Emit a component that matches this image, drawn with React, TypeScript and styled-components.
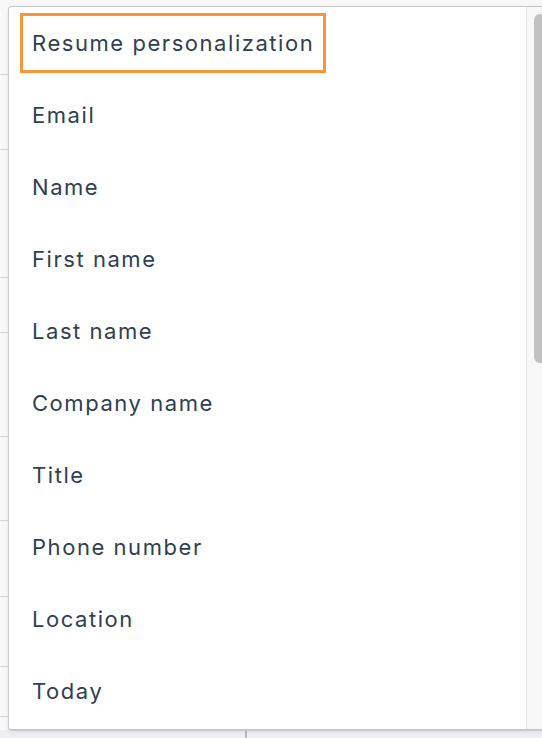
import React from "react";
import styled, { createGlobalStyle } from "styled-components";

const Global = createGlobalStyle`
  html, body { margin: 0; padding: 0; }
  body {
    width: 542px;
    height: 738px;
    overflow: hidden;
    background: #f6f6f7;
    font-family: Inter, "Liberation Sans", sans-serif;
  }
`;

const Stage = styled.div`
  position: relative;
  width: 542px;
  height: 738px;
  overflow: hidden;
`;

const Backdrop = styled.div`
  display: flex;
  flex-direction: column;
  height: 738px;
  background: #f8f8f9;
`;

const BackRow = styled.div<{ $h: number }>`
  height: ${(p) => p.$h}px;
  flex: none;
  border-bottom: 1px solid #d3d5d8;
  box-sizing: border-box;
`;

const BackFill = styled.div`
  flex: 1;
`;

const Footer = styled.div`
  flex: none;
  height: 8px;
  background: #eeeff0;
  display: grid;
  grid-template-columns: 245px 2px 1fr;
`;

const FooterDivider = styled.div`
  background: #b9bbbe;
`;

const Menu = styled.div`
  position: absolute;
  top: 6px;
  left: 8px;
  width: 560px;
  height: 725px;
  box-sizing: border-box;
  background: #ffffff;
  border: 1px solid #c6c8cb;
  border-left-width: 1.5px;
  border-bottom-width: 2px;
  border-radius: 4px 0 0 4px;
  box-shadow: 0 1px 4px rgba(0, 0, 0, 0.08);
  display: flex;
  overflow: hidden;
`;

const List = styled.ul`
  list-style: none;
  margin: 0;
  padding: 0;
  width: 517px;
  flex: none;
  display: flex;
  flex-direction: column;
`;

const Item = styled.li`
  height: 72px;
  flex: none;
  display: flex;
  align-items: center;
  padding-left: 10.5px;
`;

const Label = styled.span<{ $focused?: boolean }>`
  box-sizing: border-box;
  height: 60px;
  display: flex;
  align-items: center;
  padding: 0 9px 0 9.5px;
  border: 3.5px solid ${(p) => (p.$focused ? "#f8973a" : "transparent")};
  font-size: 22px;
  letter-spacing: 1.55px;
  color: #2f4052;
  white-space: nowrap;
`;

const Track = styled.div`
  flex: none;
  width: 30px;
  background: #f8f8f8;
  border-left: 1.5px solid #e4e4e4;
  padding: 7px 0 0 7px;
  box-sizing: border-box;
`;

const Thumb = styled.div`
  width: 16px;
  height: 349px;
  background: #c2c2c2;
  border-radius: 6px;
`;

const items = [
  "Resume personalization",
  "Email",
  "Name",
  "First name",
  "Last name",
  "Company name",
  "Title",
  "Phone number",
  "Location",
  "Today",
];

const backRows = [75, 75, 128, 55, 104, 84, 76, 70, 50];

export default function App() {
  return (
    <Stage>
      <Global />
      <Backdrop>
        {backRows.map((h, i) => (
          <BackRow key={i} $h={h} />
        ))}
        <BackFill />
        <Footer>
          <div />
          <FooterDivider />
          <div />
        </Footer>
      </Backdrop>
      <Menu>
        <List>
          {items.map((t, i) => (
            <Item key={t}>
              <Label $focused={i === 0}>{t}</Label>
            </Item>
          ))}
        </List>
        <Track>
          <Thumb />
        </Track>
      </Menu>
    </Stage>
  );
}
